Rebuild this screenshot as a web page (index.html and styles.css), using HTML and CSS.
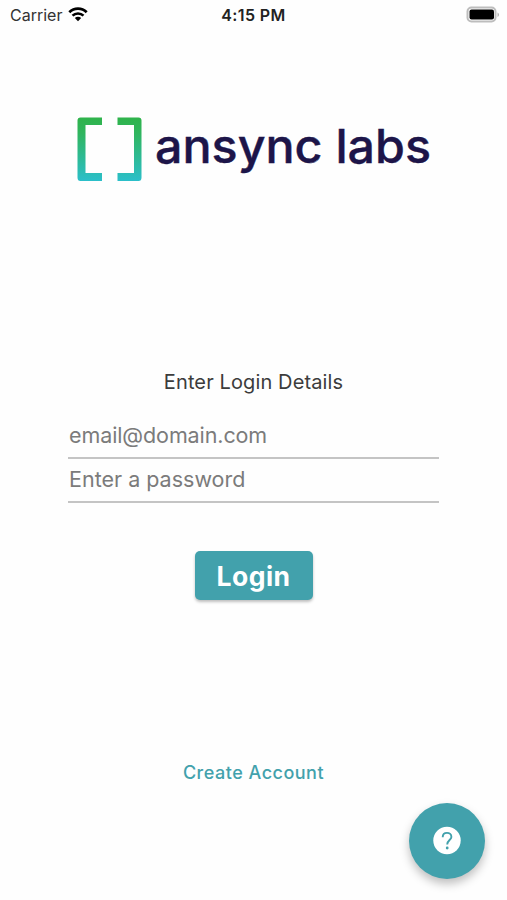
FILE: index.html
```html
<!DOCTYPE html>
<html lang="en">
<head>
    <meta charset="UTF-8">
    <meta name="viewport" content="width=device-width, initial-scale=1.0">
    <title>Ansync Labs - Login</title>
    <link rel="stylesheet" href="styles.css">
</head>
<body>

<!-- Status Bar -->
<div class="status-bar">
    <div class="carrier">
        <span>Carrier</span>
        <svg class="wifi" width="20" height="15" viewBox="0 0 20 15">
            <path d="M1.3 5.2C6.2 .4 13.8 .4 18.7 5.2" fill="none" stroke="#000" stroke-width="2.7"/>
            <path d="M4.5 8.6C7.5 5.7 12.5 5.7 15.5 8.6" fill="none" stroke="#000" stroke-width="2.6"/>
            <path d="M6.8 11C8.6 9.3 11.4 9.3 13.2 11L10 14.3Z"/>
        </svg>
    </div>
    <div class="time">4:15 PM</div>
    <svg class="battery" width="34" height="18" viewBox="0 0 34 18">
        <rect x="1.500" y="1.500" width="28" height="14" rx="4" fill="#fff" stroke="#bdbdbd" stroke-width="2"/>
        <rect x="3.500" y="3.500" width="24.500" height="10" rx="2"/>
        <path d="M31.500 6.500v4.500c2-.8 2-3.700 0-4.500z" fill="#b5b5b5"/>
    </svg>
</div>

<!-- Logo -->
<div class="logo">
    <svg width="360" height="76" viewBox="0 0 360 76">
        <defs>
            <linearGradient id="bracket" gradientUnits="userSpaceOnUse" x1="0" y1="5" x2="0" y2="69">
                <stop offset="0" stop-color="#2fb34a"/>
                <stop offset="0.25" stop-color="#30b55e"/>
                <stop offset="1" stop-color="#2bbfca"/>
            </linearGradient>
        </defs>
        <path fill="url(#bracket)" d="M28 5.500H6.500Q3.500 5.500 3.500 8.500V65.500Q3.500 69 6.500 69H28V61H11.500V13H28Z"/>
        <path fill="url(#bracket)" d="M43.500 5.500H64.500Q67.500 5.500 67.500 8.500V65.500Q67.500 69 64.500 69H43.500V61H60V13H43.500Z"/>
        <text class="logo-text" x="81" y="51" textLength="276" lengthAdjust="spacingAndGlyphs">ansync labs</text>
    </svg>
</div>

<!-- Login Form -->
<form class="login-form">
    <p class="form-title">Enter Login Details</p>
    <input class="email" type="text" placeholder="email@domain.com">
    <input class="password" type="password" placeholder="Enter a password">
    <button class="login-button" type="button">Login</button>
</form>

<a class="create-account" href="#">Create Account</a>

<!-- Help Button -->
<div class="help-button">
    <svg width="28" height="28" viewBox="0 0 28 28">
        <circle cx="14" cy="13.500" r="13.700" fill="#fff"/>
        <path d="M9.700 10.200C9.700 7.500 11.500 5.900 14 5.900S18.400 7.600 18.400 9.900C18.400 13 14.200 13.200 14.200 17.500" fill="none" stroke="#42a1ac" stroke-width="1.900"/>
        <circle cx="14.200" cy="21" r="1.400" fill="#42a1ac"/>
    </svg>
</div>

</body>
</html>
```
FILE: styles.css
```css
/* Basic Reset */
body, p {
    margin: 0;
    padding: 0;
}

body {
    display: flex;
    flex-direction: column;
    align-items: center;
    height: 900px;
    overflow: hidden;
    background-color: #fefefe;
    font-family: Inter, "Liberation Sans", sans-serif;
}

/* Status Bar */
.status-bar {
    display: grid;
    grid-template-columns: 1fr auto 1fr;
    align-items: center;
    box-sizing: border-box;
    width: 100%;
    height: 30px;
    padding: 0 7px 0 10px;
    font-size: 16px;
    color: #333;
}

.carrier {
    display: flex;
    align-items: center;
    gap: 6px;
    margin-top: -1px;
}

.time {
    margin: -1px 3px 0 0;
    font-weight: 600;
    letter-spacing: 0.4px;
    color: #222;
}

.battery {
    justify-self: end;
    margin-top: -1px;
}

/* Logo */
.logo {
    height: 76px;
    margin-top: 82px;
}

.logo svg {
    display: block;
    overflow: visible;
}

.logo-text {
    font-size: 47px;
    font-weight: 500;
    fill: #1d1549;
    stroke: #1d1549;
    stroke-width: 0.4px;
}

/* Login Form */
.login-form {
    display: flex;
    flex-direction: column;
    align-items: center;
    width: 371px;
    margin-top: 181px;
}

.form-title {
    font-size: 20px;
    line-height: 26px;
    letter-spacing: 0.12px;
    color: #3c3c3c;
}

.login-form input {
    box-sizing: border-box;
    width: 100%;
    height: 44px;
    padding: 0 0 2px 1px;
    border: none;
    border-bottom: 2px solid #c4c4c4;
    background: none;
    font-family: inherit;
    font-size: 21.5px;
    letter-spacing: -0.1px;
    outline: none;
}

.login-form input.password {
    letter-spacing: 0;
}

.login-form input::placeholder {
    color: #7b7b7b;
}

.login-form .email {
    margin-top: 20px;
}

.login-button {
    width: 118px;
    height: 49px;
    margin-top: 48px;
    padding: 0;
    border: none;
    border-radius: 5px;
    background-color: #42a1ac;
    box-shadow: 0 2px 3px rgba(0, 0, 0, 0.25);
    color: white;
    font-family: inherit;
    font-size: 26.5px;
    font-weight: 700;
    letter-spacing: 0.5px;
}

.create-account {
    margin-top: 160px;
    font-size: 18px;
    font-weight: 500;
    line-height: 26px;
    letter-spacing: 0.5px;
    color: #42a1ac;
    text-decoration: none;
}

/* Floating Help Button */
.help-button {
    position: absolute;
    right: 22px;
    bottom: 21px;
    display: flex;
    justify-content: center;
    align-items: center;
    width: 76px;
    height: 76px;
    border-radius: 50%;
    background-color: #42a1ac;
    box-shadow: 0 5px 10px rgba(0, 0, 0, 0.25);
}

.help-button svg {
    overflow: visible;
}
```
